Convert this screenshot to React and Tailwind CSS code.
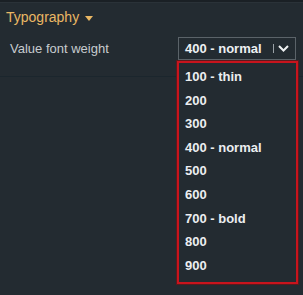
import React from 'react';

const weights = [
  "100 - thin",
  "200",
  "300",
  "400 - normal",
  "500",
  "600",
  "700 - bold",
  "800",
  "900"
];

const App = () => {
  return (
    <div className="relative w-[303px] h-[295px] overflow-hidden bg-[#232b31] font-['Liberation_Sans',Arial,sans-serif]">
      {/* top edge */}
      <div className="h-[2px] bg-[#1a2025]" />
      <div className="h-px bg-[#2a3238]" />

      {/* section */}
      <div className="h-[74px] border-b border-[#1b262d]">
        <div className="flex items-center gap-[6px] pl-[6px] pt-[5px] h-[24px] text-[14px] text-[#e9b764]">
          <span>Typography</span>
          <svg width="8" height="5" viewBox="0 0 8 5" className="mt-[1px]">
            <path d="M0 0 H8 L4 5 Z" fill="#e9b764" />
          </svg>
        </div>
        <div className="flex items-center justify-between pl-[10px] pr-[7px] mt-[10px]">
          <span className="text-[13px] text-[#c7cbcf]">Value font weight</span>
          <div className="flex items-center w-[118px] h-[23px] border border-[#5b6369] pl-[6px] pr-[6px]">
            <span className="text-[13px] font-bold text-[#eef0f2]">400 - normal</span>
            <span className="ml-auto w-px h-[9px] bg-[#9aa1a6]" />
            <svg width="11" height="7" viewBox="0 0 11 7" className="ml-[4px]">
              <path d="M1 1 L5.5 5.5 L10 1" fill="none" stroke="#eef0f2" strokeWidth="2" />
            </svg>
          </div>
        </div>
      </div>

      {/* dropdown menu */}
      <div className="absolute left-[177px] top-[61px] w-[121px] h-[223px] border-2 border-[#c8141d] bg-[#232b31] shadow-[0_0_0_1px_#5a1a1e] pt-[2px] pl-[6px]">
        {weights.map((w) => (
          <div key={w} className="flex items-center h-[23.6px] text-[13px] font-bold text-[#eceef0]">
            {w}
          </div>
        ))}
      </div>
    </div>
  );
};

export default App;
